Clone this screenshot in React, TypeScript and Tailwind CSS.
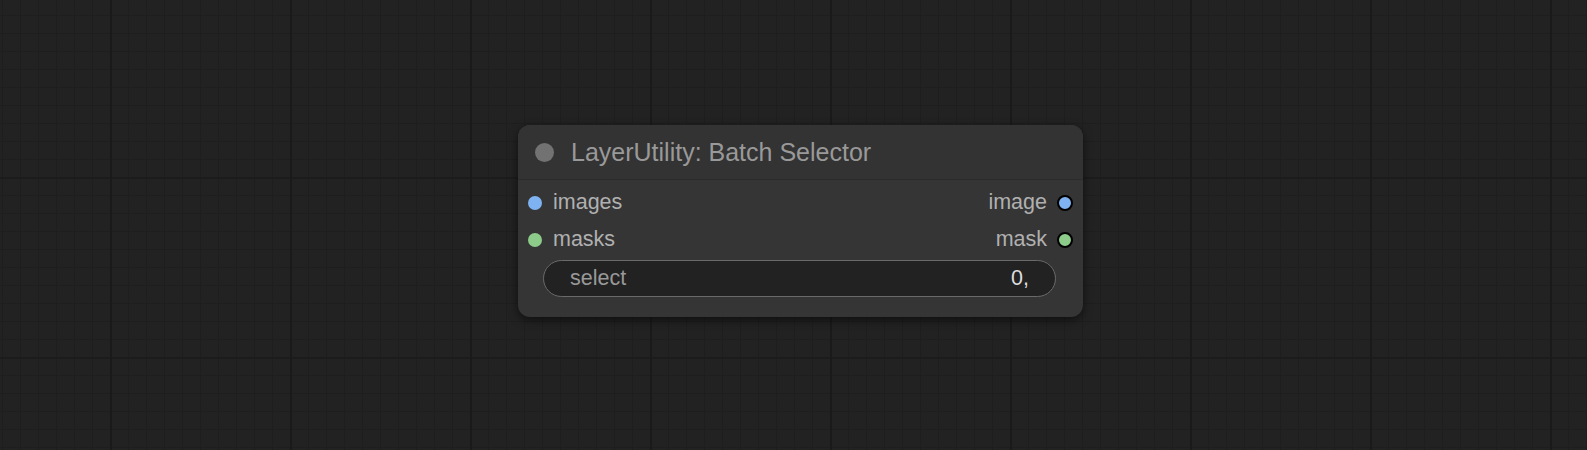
export default function App() {
  return (
    <div className="h-[450px] w-full overflow-hidden bg-[#222222] bg-[linear-gradient(to_right,#1a1a1a_2px,transparent_2px),linear-gradient(to_bottom,#1c1c1c_2px,transparent_2px),linear-gradient(to_right,#1e1e1e_1px,transparent_1px),linear-gradient(to_bottom,#1e1e1e_1px,transparent_1px)] bg-[size:180px_180px,180px_180px,18px_18px,18px_18px] bg-[position:110px_177px,110px_177px,2px_15px,2px_15px] font-['Liberation_Sans',Arial,sans-serif]">
      <div className="pl-[518px] pt-[125px]">
        <div className="w-[565px] rounded-[12px] bg-[#353535] shadow-[0_3px_10px_rgba(0,0,0,0.55)]">
          {/* title */}
          <div className="flex h-[55px] items-center gap-[17px] rounded-t-[12px] border-b border-[#2b2b2b] bg-[#333333] pl-[17px]">
            <div className="h-[19px] w-[19px] rounded-full bg-[#727272]" />
            <span className="text-[25px] leading-none text-[#999999]">
              LayerUtility: Batch Selector
            </span>
          </div>

          <div className="pb-[20px] pt-[4px]">
            <div className="flex h-[37px] items-center justify-between px-[10px]">
              <div className="flex items-center gap-[11px]">
                <div className="h-[14px] w-[14px] rounded-full bg-[#7fb2f0]" />
                <span className="text-[21.5px] leading-none text-[#b0b0b0]">images</span>
              </div>
              <div className="flex items-center gap-[10px]">
                <span className="text-[21.5px] leading-none text-[#b0b0b0]">image</span>
                <div className="h-[16px] w-[16px] rounded-full border-2 border-black bg-[#7fb2f0]" />
              </div>
            </div>
            <div className="flex h-[37px] items-center justify-between px-[10px]">
              <div className="flex items-center gap-[11px]">
                <div className="h-[14px] w-[14px] rounded-full bg-[#8ccb8a]" />
                <span className="text-[21.5px] leading-none text-[#b0b0b0]">masks</span>
              </div>
              <div className="flex items-center gap-[10px]">
                <span className="text-[21.5px] leading-none text-[#b0b0b0]">mask</span>
                <div className="h-[16px] w-[16px] rounded-full border-2 border-black bg-[#8ccb8a]" />
              </div>
            </div>

            <div className="ml-[25px] mr-[27px] mt-[2px] flex h-[37px] items-center justify-between rounded-full border-[1.5px] border-[#6a6a6a] bg-[#222222] px-[26px]">
              <span className="text-[21.5px] leading-none text-[#999999]">select</span>
              <span className="text-[21.5px] leading-none text-[#dddddd]">0,</span>
            </div>
          </div>
        </div>
      </div>
    </div>
  );
}
